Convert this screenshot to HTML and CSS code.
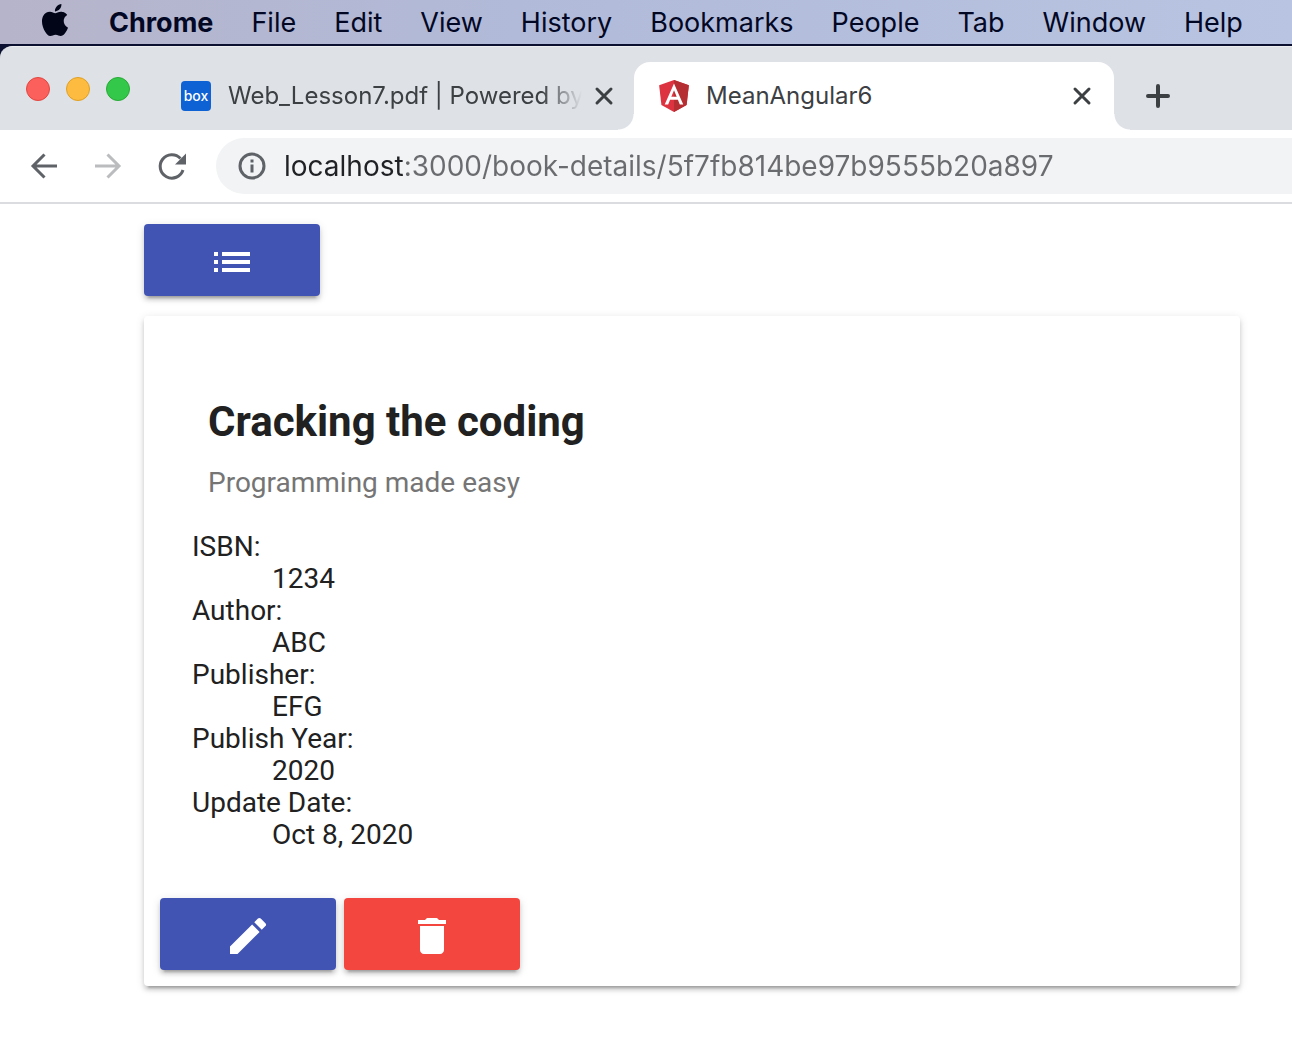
FILE: index.html
```html
<!DOCTYPE html>
<html lang="en">
<head>
<meta charset="utf-8">
<meta name="viewport" content="width=device-width, initial-scale=1">
<title>MeanAngular6</title>
<link rel="stylesheet" href="styles.css">
</head>
<body>
<nav class="menubar" aria-label="Menu bar">
  <button class="menu-item" aria-label="Apple menu"><svg class="apple" viewBox="0 0 24 24"><path d="M12.152 6.896c-.948 0-2.415-1.078-3.96-1.04-2.04.027-3.91 1.183-4.961 3.014-2.117 3.675-.546 9.103 1.519 12.09 1.013 1.454 2.208 3.09 3.792 3.039 1.52-.065 2.09-.987 3.935-.987 1.831 0 2.35.987 3.96.948 1.637-.026 2.676-1.48 3.676-2.948 1.156-1.688 1.636-3.325 1.662-3.415-.039-.013-3.182-1.221-3.22-4.857-.026-3.04 2.48-4.494 2.597-4.559-1.429-2.09-3.623-2.324-4.39-2.376-2-.156-3.675 1.09-4.61 1.09zM15.53 3.83c.843-1.012 1.4-2.427 1.245-3.83-1.207.052-2.662.805-3.532 1.818-.78.896-1.454 2.338-1.273 3.714 1.338.104 2.715-.688 3.559-1.701"/></svg></button>
  <button class="menu-item menu-app">Chrome</button>
  <button class="menu-item">File</button>
  <button class="menu-item">Edit</button>
  <button class="menu-item">View</button>
  <button class="menu-item">History</button>
  <button class="menu-item">Bookmarks</button>
  <button class="menu-item">People</button>
  <button class="menu-item">Tab</button>
  <button class="menu-item">Window</button>
  <button class="menu-item">Help</button>
</nav>
<div class="desktop">
  <header class="tabstrip">
    <div class="lights">
      <button class="light light-close" aria-label="Close window"></button>
      <button class="light light-min" aria-label="Minimize window"></button>
      <button class="light light-zoom" aria-label="Zoom window"></button>
    </div>
    <div class="tab">
      <span class="favicon"><span class="box-logo">box</span></span>
      <span class="tab-title tab-title-faded">Web_Lesson7.pdf | Powered by</span>
      <button class="tab-close" aria-label="Close tab"><svg viewBox="0 0 20 20"><path d="M3 3l14 14M17 3L3 17"/></svg></button>
    </div>
    <div class="tab tab-active">
      <span class="favicon"><svg class="angular" viewBox="31 30 188 200"><path fill="#dd3340" d="M125 30L31.900 63.200l14.200 123.100L125 230l78.900-43.700 14.200-123.100z"/><path fill="#b52e31" d="M125 30v200l78.900-43.700 14.200-123.100z"/><path fill="#fff" d="M125 52.100L66.800 182.600h21.700l11.700-29.200h49.400l11.700 29.200H183L125 52.100zm17 83.300h-34l17-40.900 17 40.900z"/></svg></span>
      <span class="tab-title">MeanAngular6</span>
      <button class="tab-close" aria-label="Close tab"><svg viewBox="0 0 20 20"><path d="M3 3l14 14M17 3L3 17"/></svg></button>
    </div>
    <button class="new-tab" aria-label="New tab"><svg viewBox="0 0 24 24"><path d="M12 2v20M2 12h20"/></svg></button>
  </header>
</div>
<div class="toolbar">
  <button class="tool" aria-label="Back"><svg viewBox="0 0 32 32"><path d="M29 16H5M16.500 4.500L5 16l11.500 11.500"/></svg></button>
  <button class="tool tool-off" aria-label="Forward" disabled><svg viewBox="0 0 32 32"><path d="M3 16h24M15.500 4.500L27 16 15.500 27.500"/></svg></button>
  <button class="tool" aria-label="Reload"><svg viewBox="0 0 32 32"><path d="M27 20A11.700 11.700 0 1 1 24.500 8.500"/><path class="solid" d="M30 3.500v11h-11z"/></svg></button>
  <div class="omnibox">
    <svg class="info" viewBox="0 0 28 28" aria-hidden="true"><circle cx="14" cy="14" r="12"/><path d="M14 12.500v8M14 7.500v3"/></svg>
    <input class="url" type="text" aria-label="Address" spellcheck="false" value="localhost:3000/book-details/5f7fb814be97b9555b20a897">
  </div>
</div>
<main class="page">
  <a class="btn btn-primary" href="#books" aria-label="Book list"><svg viewBox="0 0 24 24"><path d="M3 13h2v-2H3v2zm0 4h2v-2H3v2zm0-8h2V7H3v2zm4 4h14v-2H7v2zm0 4h14v-2H7v2zM7 7v2h14V7H7z"/></svg></a>
  <article class="card">
    <header class="card-header">
      <h2 class="card-title">Cracking the coding</h2>
      <p class="card-subtitle">Programming made easy</p>
    </header>
    <dl class="details">
      <dt>ISBN:</dt><dd>1234</dd>
      <dt>Author:</dt><dd>ABC</dd>
      <dt>Publisher:</dt><dd>EFG</dd>
      <dt>Publish Year:</dt><dd>2020</dd>
      <dt>Update Date:</dt><dd>Oct 8, 2020</dd>
    </dl>
    <div class="actions">
      <a class="btn btn-primary" href="#edit" aria-label="Edit book"><svg viewBox="0 0 24 24"><path d="M3 17.250V21h3.750L17.810 9.940l-3.750-3.750L3 17.250zM20.710 7.040a1 1 0 0 0 0-1.410l-2.340-2.340a1 1 0 0 0-1.410 0l-1.830 1.830 3.750 3.750 1.830-1.830z"/></svg></a>
      <button class="btn btn-warn" aria-label="Delete book"><svg viewBox="0 0 24 24"><path d="M6 19c0 1.100.9 2 2 2h8c1.100 0 2-.9 2-2V7H6v12zM19 4h-3.500l-1-1h-5l-1 1H5v2h14V4z"/></svg></button>
    </div>
  </article>
</main>
</body>
</html>
```
FILE: styles.css
```css
* { box-sizing: border-box; }

body {
  margin: 0;
  background: #fff;
  color: #212121;
  font-family: Roboto, sans-serif;
  font-size: 28px;
  line-height: 32px;
  overflow-x: hidden;
}

button {
  padding: 0;
  border: 0;
  background: none;
  color: inherit;
  font: inherit;
}

svg { display: block; }

/* macOS menu bar */
.menubar {
  display: flex;
  align-items: center;
  gap: 38px;
  height: 44px;
  padding: 2px 0 0 39px;
  background: linear-gradient(90deg, #b6b4ca, #b1bad9 40%, #b8c4e1);
  color: #020724;
  font-family: Inter, sans-serif;
  font-size: 27px;
  white-space: nowrap;
}

.menu-item { flex: none; }
.menu-app { font-weight: 700; }
.apple { width: 32px; height: 32px; margin-bottom: 6px; fill: #020418; }

/* Tab strip */
.desktop { padding-top: 2px; background: #0b1030; }

.tabstrip {
  display: flex;
  align-items: flex-end;
  height: 84px;
  padding-left: 26px;
  border-top: 1px solid #eceef0;
  border-top-left-radius: 12px;
  background: #dee1e6;
  color: #3c4043;
  font-family: Inter, sans-serif;
  font-size: 24px;
}

.lights {
  display: flex;
  flex: none;
  gap: 16px;
  width: 130px;
  padding-bottom: 29px;
}

.light { width: 24px; height: 24px; border: 1px solid; border-radius: 50%; }
.light-close { background: #fc605c; border-color: #e2463f; }
.light-min { background: #fdbc40; border-color: #dfa023; }
.light-zoom { background: #34c84a; border-color: #27aa35; }

.tab {
  display: flex;
  flex: 0 1 478px;
  align-items: center;
  min-width: 0;
  height: 68px;
  padding: 0 20px 0 24px;
}

.tab-active {
  position: relative;
  flex-basis: 480px;
  padding-right: 22px;
  border-radius: 16px 16px 0 0;
  background: #fff;
}

.tab-active::before,
.tab-active::after {
  content: "";
  position: absolute;
  bottom: 0;
  width: 16px;
  height: 16px;
}

.tab-active::before { right: 100%; background: radial-gradient(circle at 0 0, transparent 15px, #fff 16px); }
.tab-active::after { left: 100%; background: radial-gradient(circle at 100% 0, transparent 15px, #fff 16px); }

.favicon { display: grid; flex: none; place-items: center; width: 32px; }

.box-logo {
  width: 30px;
  height: 30px;
  border-radius: 4px;
  background: #0f62d4;
  color: #fff;
  font-size: 14px;
  line-height: 30px;
  font-weight: 500;
  text-align: center;
}

.angular { width: 30px; height: 32px; }

.tab-title {
  flex: 1;
  min-width: 0;
  margin: 0 8px 0 16px;
  white-space: nowrap;
}

.tab-title-faded {
  -webkit-mask-image: linear-gradient(90deg, #000 calc(100% - 44px), transparent calc(100% - 4px));
  mask-image: linear-gradient(90deg, #000 calc(100% - 44px), transparent calc(100% - 4px));
}

.tab-close svg { width: 20px; height: 20px; }
.tab-close, .new-tab { flex: none; }
.tab-close path, .new-tab path { fill: none; stroke: #3c4043; stroke-width: 3; stroke-linecap: round; }
.new-tab { align-self: flex-end; margin: 0 0 22px 32px; }
.new-tab svg { width: 24px; height: 24px; }
.new-tab path { stroke-width: 4; }

/* Toolbar */
.toolbar {
  display: flex;
  align-items: center;
  gap: 32px;
  height: 74px;
  padding-left: 28px;
  border-bottom: 2px solid #dadce0;
}

.tool { flex: none; width: 32px; }
.tool path { fill: none; stroke: #5f6368; stroke-width: 3; }
.tool .solid { fill: #5f6368; stroke: none; }
.tool-off path { stroke: #babcbe; }

.omnibox {
  display: flex;
  flex: 1;
  align-items: center;
  gap: 18px;
  height: 56px;
  margin-left: -4px;
  padding-left: 22px;
  border-radius: 28px 0 0 28px;
  background: #f1f3f4;
}

.info { flex: none; width: 28px; height: 28px; fill: none; stroke: #5f6368; stroke-width: 3; }

.url {
  flex: 1;
  min-width: 0;
  padding: 0;
  border: 0;
  outline: 0;
  background: linear-gradient(90deg, #202124 121px, #696b6e 121px);
  -webkit-background-clip: text;
  background-clip: text;
  color: transparent;
  font: 28px/32px Inter, sans-serif;
}

/* Book details */
.page { padding: 20px 52px 64px 144px; }

.btn {
  display: flex;
  align-items: center;
  justify-content: center;
  width: 176px;
  height: 72px;
  padding-top: 4px;
  border-radius: 4px;
  box-shadow: 0 6px 2px -4px rgba(0, 0, 0, .2), 0 4px 4px rgba(0, 0, 0, .14), 0 2px 10px rgba(0, 0, 0, .12);
}

.btn svg { width: 48px; height: 48px; fill: #fff; }
.btn-primary { background: #4154b3; }
.btn-warn { background: #f3463f; }

.card {
  margin-top: 20px;
  padding: 80px 16px 16px;
  border-radius: 4px;
  background: #fff;
  box-shadow: 0 6px 2px -4px rgba(0, 0, 0, .2), 0 4px 4px rgba(0, 0, 0, .14), 0 2px 10px rgba(0, 0, 0, .12);
}

.card-header { padding: 0 48px; }
.card-title { margin: 0; font-size: 42px; line-height: 52px; font-weight: 700; }
.card-subtitle { margin: 19px 0 0; color: #757575; }
.details { margin: 32px 32px 47px; }
.details dd { margin-left: 80px; }
.actions { display: flex; gap: 8px; }
```
